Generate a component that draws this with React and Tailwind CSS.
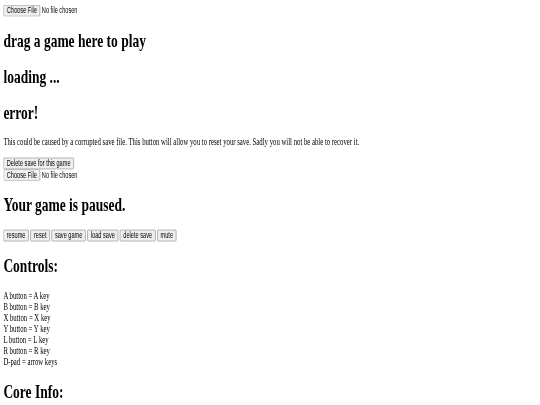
import React from 'react';

const btn =
  "font-['Liberation_Sans'] text-[13.333px] leading-[normal] bg-[#efefef] border border-[#767676] rounded-[2px] px-[7px] py-[1px] text-black";

function FilePicker() {
  return (
    <input
      type="file"
      className="font-['Liberation_Sans'] text-[13.333px] leading-[normal] file:bg-[#efefef] file:border file:border-solid file:border-[#767676] file:rounded-[2px] file:px-[7px] file:py-[1px] file:mr-[4px] file:text-black"
    />
  );
}

const controls = [
  'A button = A key',
  'B button = B key',
  'X button = X key',
  'Y button = Y key',
  'L button = L key',
  'R button = R key',
  'D-pad = arrow keys',
];

export default function App() {
  const h1 = 'text-[32px] font-bold my-[21.44px]';

  return (
    <div className="w-[540px] h-[405px] overflow-hidden bg-white">
      {/* page was rendered wide and shrunk into the shot */}
      <div className="w-[1280px] origin-top-left scale-x-[0.421875] scale-y-[0.611] p-2 font-['Liberation_Serif'] text-[16px] leading-[normal] text-black">
        <FilePicker />
        <h1 className={h1}>drag a game here to play</h1>
        <h1 className={h1}>loading ...</h1>
        <div>
          <h1 className={h1}>error!</h1>
          <p className="my-4">
            This could be caused by a corrupted save file. This button will allow you to reset your save. Sadly you will not be able to recover it.
          </p>
          <button className={btn}>Delete save for this game</button>
          <br />
          <FilePicker />
        </div>
        <div>
          <h1 className={h1}>Your game is paused.</h1>
          <button className={btn}>resume</button>{' '}
          <button className={btn}>reset</button>{' '}
          <button className={btn}>save game</button>{' '}
          <button className={btn}>load save</button>{' '}
          <button className={btn}>delete save</button>{' '}
          <button className={btn}>mute</button>
        </div>
        <h1 className={h1}>Controls:</h1>
        <p className="my-4">
          {controls.map((c, i) => (
            <React.Fragment key={i}>
              {c}
              <br />
            </React.Fragment>
          ))}
        </p>
        <h1 className={h1}>Core Info:</h1>
      </div>
    </div>
  );
}
